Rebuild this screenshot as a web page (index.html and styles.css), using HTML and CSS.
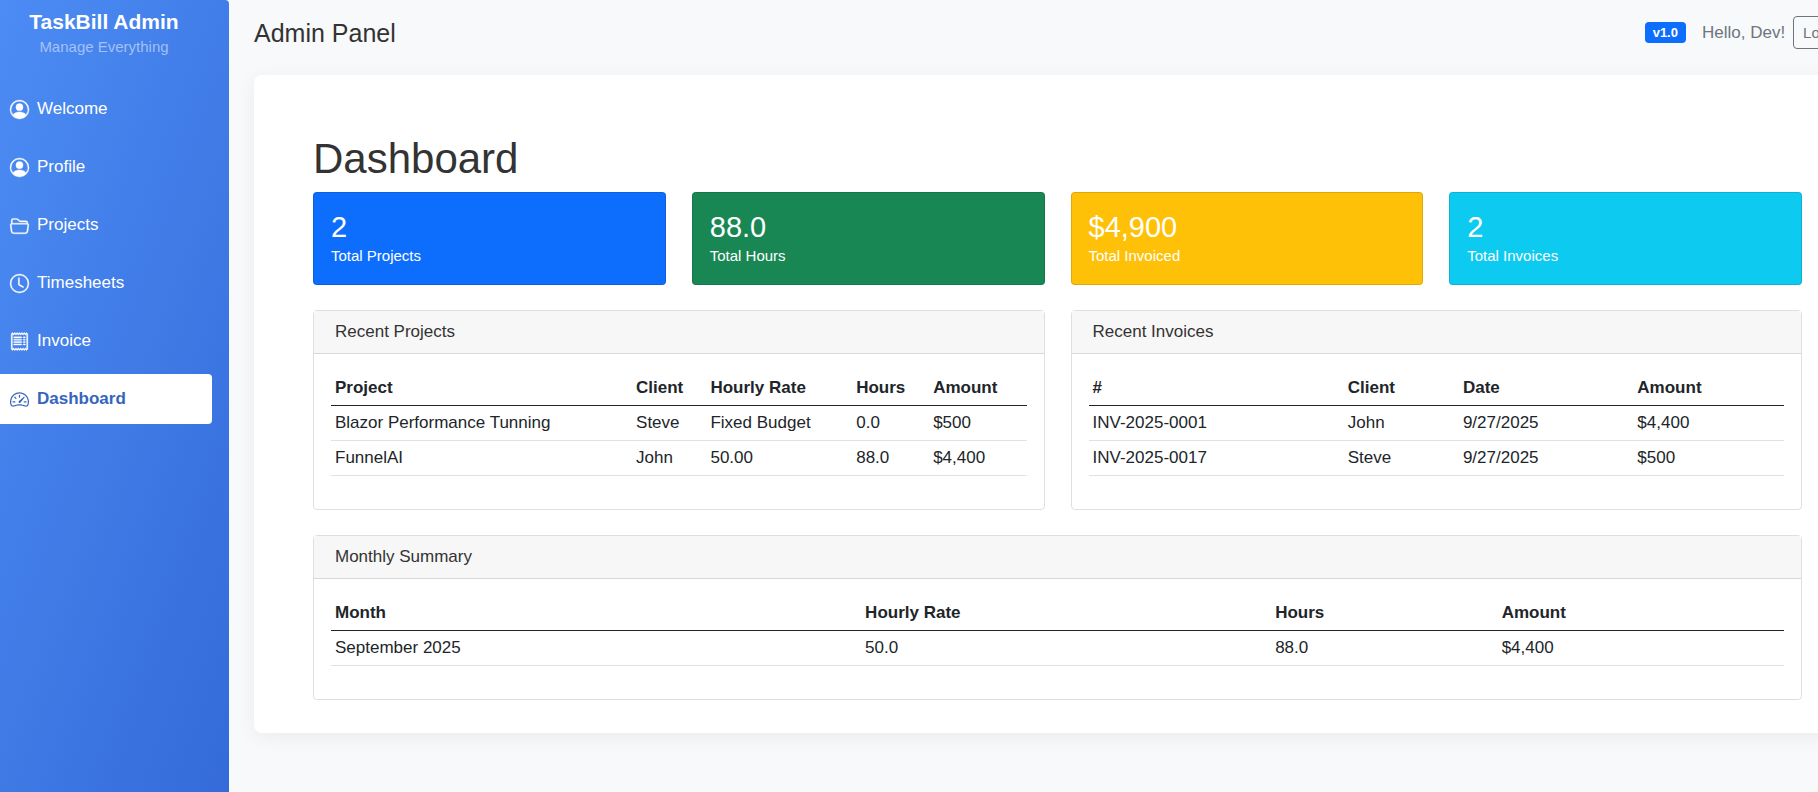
FILE: index.html
```html
<!DOCTYPE html>
<html lang="en">
<head>
  <meta charset="UTF-8">
  <meta name="viewport" content="width=device-width, initial-scale=1.0">
  <title>TaskBill Admin - Dashboard</title>
  <link rel="stylesheet" href="styles.css">
</head>
<body>
  <div class="layout">
    <aside class="sidebar">
      <div class="brand">
        <h4>TaskBill Admin</h4>
        <small>Manage Everything</small>
      </div>
      <nav class="nav-links">
        <a href="#welcome">
          <svg class="icon" viewBox="0 0 16 16"><path d="M11 6a3 3 0 1 1-6 0 3 3 0 0 1 6 0z"/><path fill-rule="evenodd" d="M0 8a8 8 0 1 1 16 0A8 8 0 0 1 0 8zm8-7a7 7 0 0 0-5.468 11.37C3.242 11.226 4.805 10 8 10s4.757 1.225 5.468 2.37A7 7 0 0 0 8 1z"/></svg>
          Welcome
        </a>
        <a href="#profile">
          <svg class="icon" viewBox="0 0 16 16"><path d="M11 6a3 3 0 1 1-6 0 3 3 0 0 1 6 0z"/><path fill-rule="evenodd" d="M0 8a8 8 0 1 1 16 0A8 8 0 0 1 0 8zm8-7a7 7 0 0 0-5.468 11.37C3.242 11.226 4.805 10 8 10s4.757 1.225 5.468 2.37A7 7 0 0 0 8 1z"/></svg>
          Profile
        </a>
        <a href="#projects">
          <svg class="icon" viewBox="0 0 16 16"><path d="M1 3.500A1.500 1.500 0 0 1 2.500 2h2.764c.958 0 1.760.560 2.311 1.184C7.985 3.648 8.480 4 9 4h4.500A1.500 1.500 0 0 1 15 5.500v.640c.570.265.940.876.856 1.546l-.640 5.124A2.500 2.500 0 0 1 12.733 15H3.266a2.500 2.500 0 0 1-2.481-2.190l-.640-5.124A1.500 1.500 0 0 1 1 6.140V3.500zM2 6h12v-.500a.500.500 0 0 0-.500-.500H9c-.964 0-1.710-.629-2.174-1.154C6.374 3.334 5.820 3 5.264 3H2.500a.500.500 0 0 0-.500.500V6zm-.367 1a.500.500 0 0 0-.496.562l.640 5.124A1.500 1.500 0 0 0 3.266 14h9.468a1.500 1.500 0 0 0 1.489-1.314l.640-5.124A.500.500 0 0 0 14.367 7H1.633z"/></svg>
          Projects
        </a>
        <a href="#timesheets">
          <svg class="icon" viewBox="0 0 16 16"><path d="M8 3.5a.5.5 0 0 0-1 0V9a.5.5 0 0 0 .252.434l3.5 2a.5.5 0 0 0 .496-.868L8 8.71V3.5z"/><path d="M8 16A8 8 0 1 0 8 0a8 8 0 0 0 0 16zm7-8A7 7 0 1 1 1 8a7 7 0 0 1 14 0z"/></svg>
          Timesheets
        </a>
        <a href="#invoice">
          <svg class="icon" viewBox="0 0 16 16"><path d="M1.92.506a.5.5 0 0 1 .434.14L3 1.293l.646-.647a.5.5 0 0 1 .708 0L5 1.293l.646-.647a.5.5 0 0 1 .708 0L7 1.293l.646-.647a.5.5 0 0 1 .708 0L9 1.293l.646-.647a.5.5 0 0 1 .708 0l.646.647.646-.647a.5.5 0 0 1 .708 0l.646.647.646-.647a.5.5 0 0 1 .801.13l.5 1A.5.5 0 0 1 15 2v12a.5.5 0 0 1-.053.224l-.5 1a.5.5 0 0 1-.8.13L13 14.707l-.646.647a.5.5 0 0 1-.708 0L11 14.707l-.646.647a.5.5 0 0 1-.708 0L9 14.707l-.646.647a.5.5 0 0 1-.708 0L7 14.707l-.646.647a.5.5 0 0 1-.708 0L5 14.707l-.646.647a.5.5 0 0 1-.708 0L3 14.707l-.646.647a.5.5 0 0 1-.801-.13l-.5-1A.5.5 0 0 1 1 14V2a.5.5 0 0 1 .053-.224l.5-1a.5.5 0 0 1 .367-.27zm.217 1.338L2 2.118v11.764l.137.274.51-.51a.5.5 0 0 1 .707 0l.646.647.646-.646a.5.5 0 0 1 .708 0l.646.646.646-.646a.5.5 0 0 1 .708 0l.646.646.646-.646a.5.5 0 0 1 .708 0l.646.646.646-.646a.5.5 0 0 1 .708 0l.646.646.646-.646a.5.5 0 0 1 .708 0l.509.509.137-.274V2.118l-.137-.274-.51.51a.5.5 0 0 1-.707 0L12 1.707l-.646.647a.5.5 0 0 1-.708 0L10 1.707l-.646.647a.5.5 0 0 1-.708 0L8 1.707l-.646.647a.5.5 0 0 1-.708 0L6 1.707l-.646.647a.5.5 0 0 1-.708 0L4 1.707l-.646.647a.5.5 0 0 1-.708 0l-.509-.51z"/><path d="M3 4.5a.5.5 0 0 1 .5-.5h6a.5.5 0 1 1 0 1h-6a.5.5 0 0 1-.5-.5zm0 2a.5.5 0 0 1 .5-.5h6a.5.5 0 1 1 0 1h-6a.5.5 0 0 1-.5-.5zm0 2a.5.5 0 0 1 .5-.5h6a.5.5 0 1 1 0 1h-6a.5.5 0 0 1-.5-.5zm0 2a.5.5 0 0 1 .5-.5h6a.5.5 0 0 1 0 1h-6a.5.5 0 0 1-.5-.5zm8-6a.5.5 0 0 1 .5-.5h1a.5.5 0 0 1 0 1h-1a.5.5 0 0 1-.5-.5zm0 2a.5.5 0 0 1 .5-.5h1a.5.5 0 0 1 0 1h-1a.5.5 0 0 1-.5-.5zm0 2a.5.5 0 0 1 .5-.5h1a.5.5 0 0 1 0 1h-1a.5.5 0 0 1-.5-.5zm0 2a.5.5 0 0 1 .5-.5h1a.5.5 0 0 1 0 1h-1a.5.5 0 0 1-.5-.5z"/></svg>
          Invoice
        </a>
        <a href="#dashboard" class="active">
          <svg class="icon" viewBox="0 0 16 16"><path d="M8 4a.5.5 0 0 1 .5.5V6a.5.5 0 0 1-1 0V4.500A.5.5 0 0 1 8 4zM3.732 5.732a.5.5 0 0 1 .707 0l.915.914a.5.5 0 1 1-.708.708l-.914-.915a.5.5 0 0 1 0-.707zM2 10a.5.5 0 0 1 .5-.5h1.586a.5.5 0 0 1 0 1H2.500A.5.5 0 0 1 2 10zm9.500 0a.5.5 0 0 1 .5-.5h1.500a.5.5 0 0 1 0 1H12a.5.5 0 0 1-.5-.5zm.754-4.246a.389.389 0 0 0-.527-.02L7.547 9.310a.910.910 0 1 0 1.302 1.258l3.434-4.297a.389.389 0 0 0-.029-.518z"/><path fill-rule="evenodd" d="M0 10a8 8 0 1 1 15.547 2.661c-.442 1.253-1.845 1.602-2.932 1.250C11.309 13.488 9.475 13 8 13c-1.474 0-3.310.488-4.615.911-1.087.352-2.490.003-2.932-1.250A7.988 7.988 0 0 1 0 10zm8-7a7 7 0 0 0-6.603 9.329c.203.575.923.876 1.680.630C4.397 12.533 6.358 12 8 12s3.604.532 4.923.960c.757.245 1.477-.056 1.680-.631A7 7 0 0 0 8 3z"/></svg>
          Dashboard
        </a>
      </nav>
    </aside>

    <div class="main">
      <header class="topbar">
        <h5>Admin Panel</h5>
        <div class="user-area">
          <span class="badge">v1.0</span>
          <span class="greeting">Hello, Dev!</span>
          <button type="button" class="btn-logout">Logout</button>
        </div>
      </header>

      <main class="content">
        <h1>Dashboard</h1>

        <div class="stats">
          <div class="stat-card total-projects">
            <h3>2</h3>
            <p>Total Projects</p>
          </div>
          <div class="stat-card total-hours">
            <h3>88.0</h3>
            <p>Total Hours</p>
          </div>
          <div class="stat-card total-invoiced">
            <h3>$4,900</h3>
            <p>Total Invoiced</p>
          </div>
          <div class="stat-card total-invoices">
            <h3>2</h3>
            <p>Total Invoices</p>
          </div>
        </div>

        <div class="panels">
          <section class="card">
            <div class="card-header">Recent Projects</div>
            <div class="card-body">
              <table>
                <thead>
                  <tr><th>Project</th><th>Client</th><th>Hourly Rate</th><th>Hours</th><th>Amount</th></tr>
                </thead>
                <tbody>
                  <tr><td>Blazor Performance Tunning</td><td>Steve</td><td>Fixed Budget</td><td>0.0</td><td>$500</td></tr>
                  <tr><td>FunnelAI</td><td>John</td><td>50.00</td><td>88.0</td><td>$4,400</td></tr>
                </tbody>
              </table>
            </div>
          </section>

          <section class="card">
            <div class="card-header">Recent Invoices</div>
            <div class="card-body">
              <table>
                <thead>
                  <tr><th>#</th><th>Client</th><th>Date</th><th>Amount</th></tr>
                </thead>
                <tbody>
                  <tr><td>INV-2025-0001</td><td>John</td><td>9/27/2025</td><td>$4,400</td></tr>
                  <tr><td>INV-2025-0017</td><td>Steve</td><td>9/27/2025</td><td>$500</td></tr>
                </tbody>
              </table>
            </div>
          </section>

          <section class="card wide">
            <div class="card-header">Monthly Summary</div>
            <div class="card-body">
              <table>
                <thead>
                  <tr><th>Month</th><th>Hourly Rate</th><th>Hours</th><th>Amount</th></tr>
                </thead>
                <tbody>
                  <tr><td>September 2025</td><td>50.0</td><td>88.0</td><td>$4,400</td></tr>
                </tbody>
              </table>
            </div>
          </section>
        </div>
      </main>
    </div>
  </div>
</body>
</html>
```

FILE: styles.css
```css
* {
  margin: 0;
  padding: 0;
  box-sizing: border-box;
}

body {
  font-family: "Liberation Sans", Arial, sans-serif;
  font-size: 17px;
  line-height: 26px;
  color: #333;
  background-color: #f8f9fb;
  overflow-x: hidden;
}

.layout {
  display: flex;
  min-height: 100vh;
}

/* Sidebar */
.sidebar {
  flex: 0 0 250px;
  margin-left: -21px;
  padding: 8px 17px;
  background: linear-gradient(110deg, #4d8df6, #346bd8);
  border-top-right-radius: 4px;
  color: white;
}

.brand {
  text-align: center;
  margin-bottom: 25px;
}

.brand h4 {
  font-size: 21px;
  line-height: 27px;
}

.brand small {
  display: block;
  font-size: 15px;
  line-height: 24px;
  color: rgba(255, 255, 255, 0.5);
}

.nav-links {
  display: flex;
  flex-direction: column;
  gap: 8px;
}

.nav-links a {
  display: flex;
  align-items: center;
  gap: 8px;
  padding: 12px 14px;
  border-radius: 4px;
  color: white;
  text-decoration: none;
}

.nav-links a:hover {
  background-color: rgba(255, 255, 255, 0.2);
}

.nav-links a.active {
  background-color: white;
  color: #3665bd;
  font-weight: bold;
}

.icon {
  width: 19px;
  height: 19px;
  fill: currentColor;
  stroke: currentColor;
  stroke-width: 0.3;
  overflow: visible;
}

.active .icon {
  stroke: none;
}

/* Main area, runs past the right edge of the window */
.main {
  flex: 1;
  min-width: 0;
  padding-left: 25px;
  margin-right: -43px;
}

.topbar {
  display: flex;
  justify-content: space-between;
  align-items: center;
  padding: 16px 0 17px;
  margin-bottom: 9px;
}

.topbar h5 {
  font-size: 25px;
  font-weight: normal;
}

.user-area {
  display: flex;
  align-items: center;
  gap: 8px;
  padding-right: 2px;
}

.badge {
  padding: 0 8px;
  margin-right: 8px;
  border-radius: 4px;
  background-color: #0d6efd;
  color: white;
  font-size: 13px;
  font-weight: bold;
  line-height: 21px;
}

.greeting {
  color: #6c757d;
}

.btn-logout {
  padding: 4px 9px;
  border: 1px solid #6c757d;
  border-radius: 4px;
  background: transparent;
  color: #6c757d;
  font-family: inherit;
  font-size: 15px;
  line-height: 23px;
}

.content {
  padding: 59px 59px 33px;
  border-radius: 8px;
  background-color: white;
  box-shadow: 0 4px 20px rgba(0, 0, 0, 0.06);
}

.content h1 {
  font-size: 42px;
  font-weight: normal;
  line-height: 50px;
  margin-bottom: 8px;
}

/* Totals */
.stats {
  display: grid;
  grid-template-columns: repeat(4, 1fr);
  gap: 26px;
  margin-bottom: 25px;
}

.stat-card {
  padding: 17px;
  border: 1px solid rgba(0, 0, 0, 0.125);
  border-radius: 4px;
  color: white;
}

.stat-card h3 {
  font-size: 29px;
  font-weight: normal;
  line-height: 35px;
}

.stat-card p {
  font-size: 15px;
  line-height: 22px;
}

.total-projects {
  background-color: #0d6efd;
}

.total-hours {
  background-color: #198754;
}

.total-invoiced {
  background-color: #ffc107;
}

.total-invoices {
  background-color: #0dcaf0;
}

/* Table cards */
.panels {
  display: grid;
  grid-template-columns: repeat(2, 1fr);
  gap: 25px 26px;
}

.wide {
  grid-column: span 2;
}

.card {
  border: 1px solid rgba(0, 0, 0, 0.125);
  border-radius: 4px;
}

.card-header {
  padding: 8px 21px;
  border-bottom: 1px solid rgba(0, 0, 0, 0.125);
  background-color: #f7f7f7;
}

.card-body {
  padding: 17px;
}

table {
  width: 100%;
  margin-bottom: 16px;
  border-collapse: collapse;
  color: #212529;
}

th,
td {
  padding: 4px;
  border-bottom: 1px solid #dee2e6;
  text-align: left;
}

th {
  border-bottom-color: #212529;
}
```
